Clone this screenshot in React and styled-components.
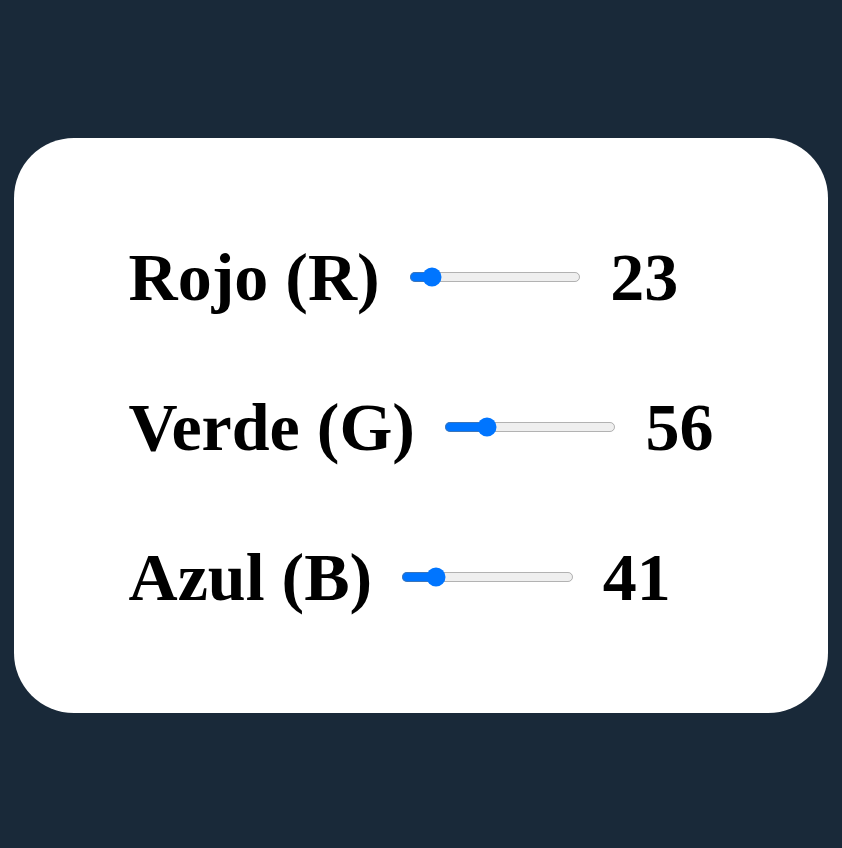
import styled, { createGlobalStyle } from "styled-components";

const GlobalStyle = createGlobalStyle`
  html, body {
    margin: 0;
    padding: 0;
    background-color: #192939;
  }
`;

const colors = [
  { label: "Rojo (R)", value: 23 },
  { label: "Verde (G)", value: 56 },
  { label: "Azul (B)", value: 41 },
];

const App = () => {
  return (
    <Page>
      <GlobalStyle />
      <Card>
        <Sliders>
          {colors.map((c) => (
            <Row key={c.label}>
              <Label>{c.label}</Label>
              <Range type="range" min="0" max="255" defaultValue={c.value} />
              <Value>{c.value}</Value>
            </Row>
          ))}
        </Sliders>
      </Card>
    </Page>
  );
};

export default App;

const Page = styled.div`
  min-height: 100vh;
  display: flex;
  align-items: center;
  justify-content: center;
  padding: 2px 14px 0;
  box-sizing: border-box;
`;

const Card = styled.div`
  width: 100%;
  height: 575px;
  box-sizing: border-box;
  padding-top: 4px;
  background-color: white;
  border-radius: 60px;
  display: flex;
  align-items: center;
  justify-content: center;
`;

const Sliders = styled.div`
  display: flex;
  flex-direction: column;
  align-items: flex-start;
  gap: 72px;
`;

const Row = styled.div`
  display: flex;
  align-items: center;
  gap: 29px;
  font-family: "Liberation Serif", serif;
  font-weight: bold;
  font-size: 68px;
  line-height: 78px;
  color: black;
`;

const Label = styled.span``;

const Value = styled.span``;

const Range = styled.input`
  width: 138px;
  margin: 0;
  zoom: 1.25;
  accent-color: #0075ff;
`;
